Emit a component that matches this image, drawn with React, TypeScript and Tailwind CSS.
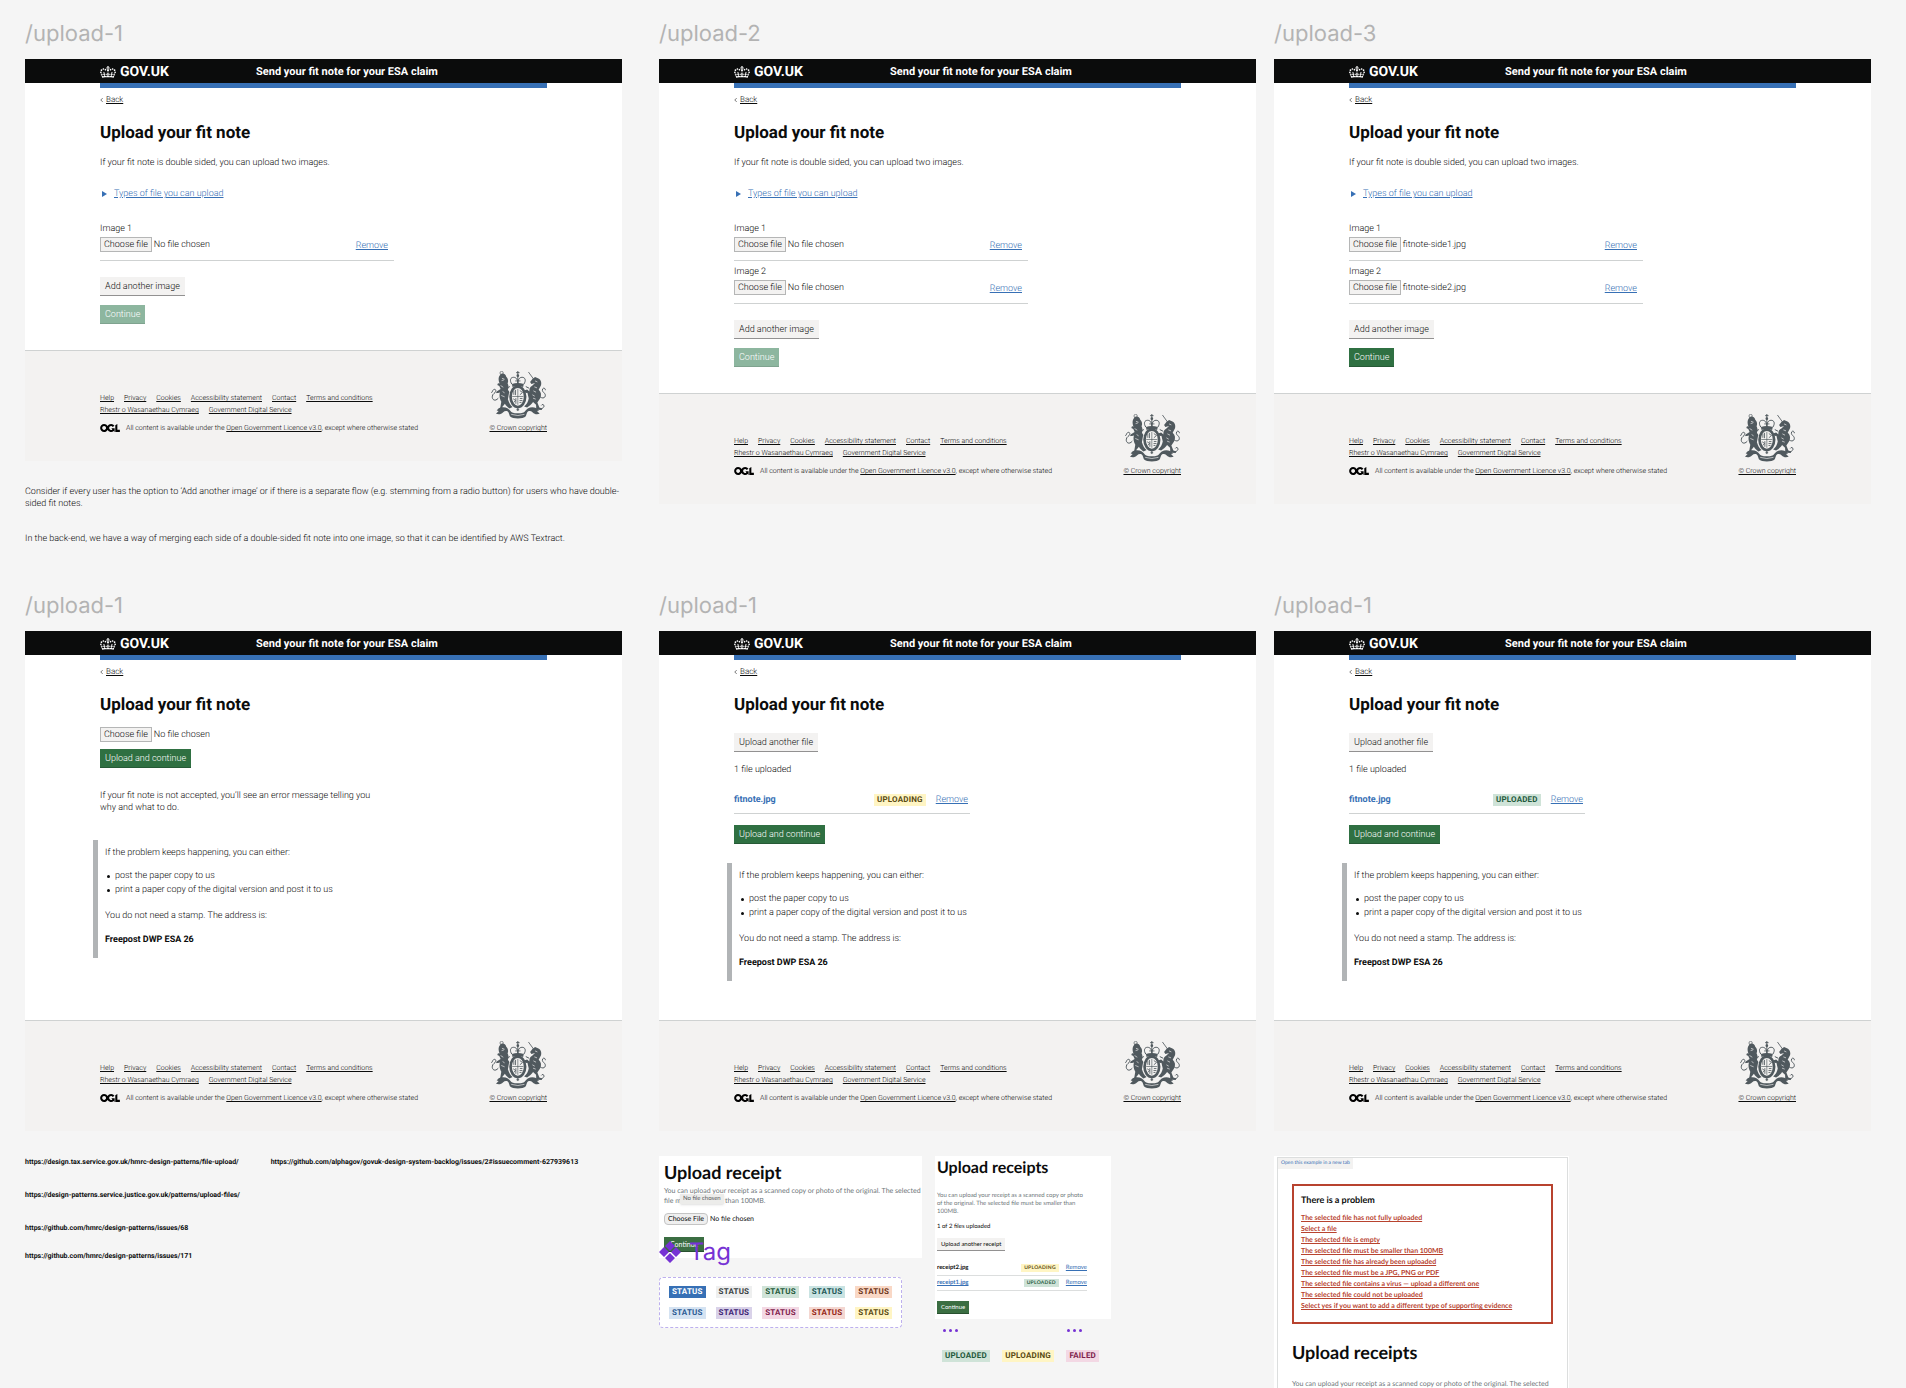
import type { ReactNode } from "react";

const roboto = "font-['Roboto',sans-serif]";
const lato = "font-['Lato',sans-serif]";
const inter = "font-['Inter',sans-serif]";

function Crown() {
  return (
    <svg viewBox="0 0 132 97" className="h-3 w-4" fill="currentColor" aria-hidden="true">
      <path
        fillRule="evenodd"
        d="M25 30.2c3.5 1.5 7.7-.2 9.1-3.7 1.5-3.6-.2-7.8-3.9-9.2-3.6-1.4-7.6.3-9.1 3.9-1.4 3.5.3 7.5 3.9 9zM9 39.5c3.6 1.5 7.8-.2 9.2-3.7 1.5-3.6-.2-7.8-3.9-9.1-3.6-1.5-7.6.2-9.1 3.8-1.4 3.5.3 7.5 3.8 9zM4.4 57.2c3.5 1.5 7.7-.2 9.1-3.8 1.5-3.6-.2-7.7-3.9-9.1-3.5-1.5-7.6.3-9.1 3.8-1.4 3.5.3 7.6 3.9 9.1zm38.3-21.4c3.5 1.5 7.7-.2 9.1-3.8 1.5-3.6-.2-7.7-3.9-9.1-3.6-1.5-7.6.3-9.1 3.8-1.3 3.6.4 7.7 3.9 9.1zm64.4-5.6c-3.6 1.5-7.8-.2-9.1-3.7-1.5-3.6.2-7.8 3.8-9.2 3.6-1.4 7.7.3 9.2 3.9 1.3 3.5-.4 7.5-3.9 9zm15.9 9.3c-3.6 1.5-7.7-.2-9.1-3.7-1.5-3.6.2-7.8 3.7-9.1 3.6-1.5 7.7.2 9.2 3.8 1.5 3.5-.3 7.5-3.8 9zm4.7 17.7c-3.6 1.5-7.8-.2-9.2-3.8-1.5-3.6.2-7.7 3.9-9.1 3.6-1.5 7.7.3 9.2 3.8 1.3 3.5-.4 7.6-3.9 9.1zM89.3 35.8c-3.6 1.5-7.8-.2-9.2-3.8-1.4-3.6.2-7.7 3.9-9.1 3.6-1.5 7.7.3 9.2 3.8 1.4 3.6-.3 7.7-3.9 9.1zM69.7 17.7l8.9 4.7V9.3l-8.9 2.8c-.2-.3-.5-.6-.9-.9L72.4 0H59.6l3.5 11.2c-.3.3-.6.5-.9.9l-8.8-2.8v13.1l8.8-4.7c.3.3.6.7.9.9l-5 15.4v.1c-.2.8-.4 1.6-.4 2.4 0 4.1 3.1 7.5 7 8.1h.2c.3 0 .7.1 1 .1.4 0 .7 0 1-.1h.2c4-.6 7.1-4.1 7.1-8.1 0-.8-.1-1.7-.4-2.4V34l-5.1-15.4c.4-.2.7-.6 1-.9zM66 92.8c16.9 0 32.8 1.1 47.1 3.2 4-16.9 8.9-26.7 14-33.5l-9.6-3.4c1 4.9 1.1 7.2 0 10.2-1.5-1.4-3-4.3-4.2-8.7L108.6 76c2.8-2 5-3.2 7.5-3.3-4.4 9.4-10 11.9-13.6 11.2-4.3-.8-6.3-4.6-5.6-7.9 1-4.7 5.7-5.9 8-.5 4.3-8.7-3-11.4-7.6-8.8 7.1-7.2 7.9-13.5 2.1-21.1-8 6.1-8.1 12.3-4.5 20.8-4.7-5.4-12.1-2.5-9.5 6.2 3.4-5.2 7.9-2 7.2 3.1-.6 4.3-6.4 7.8-13.5 7.2-10.3-.9-10.9-8-11.2-13.8 2.5-.5 7.1 1.8 11 7.3L80.2 60c-4.1 4.4-8 5.3-12.3 5.4 1.4-4.4 8-11.6 8-11.6H55.5s6.4 7.2 7.9 11.6c-4.2-.1-8-1-12.3-5.4l1.4 16.4c3.9-5.5 8.5-7.7 10.9-7.3-.3 5.8-.9 12.8-11.1 13.8-7.2.6-12.9-2.9-13.5-7.2-.7-5 3.8-8.3 7.1-3.1 2.7-8.7-4.6-11.6-9.4-6.2 3.7-8.5 3.6-14.7-4.6-20.8-5.8 7.6-5 13.9 2.2 21.1-4.7-2.6-11.9.1-7.7 8.8 2.3-5.5 7.1-4.2 8.1.5.7 3.3-1.3 7.1-5.7 7.9-3.5.7-9-1.8-13.5-11.2 2.5.1 4.7 1.3 7.5 3.3l-4.7-15.4c-1.2 4.4-2.7 7.2-4.3 8.7-1.1-3-.9-5.3 0-10.2l-9.5 3.4c5 6.9 9.9 16.7 14 33.5 14.8-2.1 30.8-3.2 47.7-3.2z"
      />
    </svg>
  );
}

function LicenceLogo() {
  return (
    <svg viewBox="0 0 483.2 195.7" className="h-2 w-5 shrink-0" fill="#000" aria-hidden="true">
      <path d="M421.5 142.8V.1l-50.7 32.3v161.1h112.4v-50.7zm-122.3-9.6A47.12 47.12 0 0 1 221 97.8c0-26 21.1-47.1 47.1-47.1 16.7 0 31.4 8.7 39.7 21.8l42.7-27.2A97.63 97.63 0 0 0 268.1 0c-36.5 0-68.3 20.1-85.1 49.7A98 98 0 0 0 97.8 0C43.9 0 0 43.9 0 97.8s43.9 97.8 97.8 97.8c36.5 0 68.3-20.1 85.1-49.7a97.76 97.76 0 0 0 149.6 25.4l19.4 22.2h3v-87.8h-80l24.3 27.5zM97.8 145c-26 0-47.1-21.1-47.1-47.1s21.1-47.1 47.1-47.1 47.1 21.1 47.1 47.1S123.8 145 97.8 145" />
    </svg>
  );
}

/* Royal arms: crown above an oval shield, lion and unicorn supporters, ribbon below */
function RoyalArms() {
  return (
    <svg viewBox="0 0 172 145" className="h-12 w-[57px]" fill="#50595e" stroke="#50595e" aria-hidden="true">
      {/* crown */}
      <path d="M84 0v13M79 5h10" strokeWidth="3" fill="none" />
      <circle cx="84" cy="14" r="4" stroke="none" />
      <path
        d="M66 40C58 28 62 19 71 19s13 8 13 20c0-12 4-20 13-20s13 9 5 21M84 15v24"
        fill="none"
        strokeWidth="3"
      />
      <path d="M66 39q18-6 36 0l-2 9q-16-5-32 0z" stroke="none" />
      <path d="M76 30h16" strokeWidth="2.5" />
      {/* shield */}
      <ellipse cx="84" cy="78" rx="22" ry="31" fill="#f3f2f1" strokeWidth="8" />
      <path d="M84 54v48M67 77h34" strokeWidth="2" />
      <path d="M72 59v13M77 57v16M90 59l8 6-8 7M70 84l7 5-5 6M78 82v17M90 83h8M89 89h9M89 95h6" fill="none" strokeWidth="2.5" />
      {/* lion */}
      <path
        d="M31 10c7-5 16-1 18 7 6 6 7 14 4 20 3 6 4 14 1 20l4 6-4 22c3 10 7 18 14 24l-9 4c-6-4-11-8-14-14l-8 10 5 8-19 1 3-5 5-3 3-17c-5-9-7-19-4-29-6 4-8 1-12 3l2-5 12-8-4-9-6-3 2-5 5 1c-4-8-5-20 2-27z"
        stroke="none"
      />
      <path d="M25 82c-10 12-20 4-18-6 1-8 8-8 10-14 2-5-2-8-6-6-4 3-3 7-7 10" fill="none" strokeWidth="3" />
      <circle cx="35" cy="6" r="5" fill="none" strokeWidth="2" />
      <path d="M36 22l8 3M35 29l7-2M32 44l8 5M38 62l6 4M34 74l10 4" stroke="#f3f2f1" strokeWidth="2" />
      {/* unicorn */}
      <path d="M116 3l16 22" strokeWidth="2.5" fill="none" />
      <path
        d="M128 24l8-6 7 3c9 3 14 12 11 22l-7 14c8 7 9 17 4 26l-8 12 6 15 9 3-2 5-16-2-1-14-9-8c-4 7-11 12-18 16l-9-3c8-6 12-14 14-24l-4-17-8-1-2-6 9-3 8 7c-3-8 0-15 8-19l8-8-11 3-4-6z"
        stroke="none"
      />
      <path d="M151 78c12 9 20-2 14-10-4-5-9-7-6-14 2-4 9-2 8 4M140 112c8 5 20 3 23-5 1-6-6-8-8-3" fill="none" strokeWidth="3" />
      <path d="M136 30l7 3M134 48l8 3M131 60l8 4M128 72l7 4M130 82l8 3" stroke="#f3f2f1" strokeWidth="2" />
      <path d="M118 52l-10-5M120 61l-11 4M50 52l10-5M48 61l10 4" strokeWidth="3" />
      {/* ribbon */}
      <path
        d="M20 119c8-10 22-13 34-6 5 3 8 10 13 12 10 4 24 4 34 0 5-2 8-9 13-12 12-7 26-4 34 6l-6 2 8 8c-9 3-16 1-21-4-6-6-13-6-17 0l-4 12c-8 9-40 9-48 0l-4-12c-4-6-11-6-17 0-5 5-12 7-21 4l8-8z"
        stroke="none"
      />
      <path d="M64 131q20 7 40 0" stroke="#f3f2f1" strokeWidth="2" fill="none" />
      <path d="M84 112v9M80 117h8" strokeWidth="3" />
    </svg>
  );
}

function A({ children, className = "" }: { children: ReactNode; className?: string }) {
  return (
    <a href="#" className={"underline underline-offset-1 " + className}>
      {children}
    </a>
  );
}

function Footer() {
  return (
    <footer className="flex items-end justify-between border-t border-[#cfd2d2] bg-[#f3f2f1] px-[75px] pt-5 pb-[27px] text-[7px] leading-3 font-light whitespace-nowrap">
      <div>
        <nav aria-label="Support links">
          <ul className="flex gap-2.5">
            {["Help", "Privacy", "Cookies", "Accessibility statement", "Contact", "Terms and conditions"].map((t) => (
              <li key={t}>
                <A>{t}</A>
              </li>
            ))}
          </ul>
          <ul className="flex gap-2.5">
            <li>
              <A>Rhestr o Wasanaethau Cymraeg</A>
            </li>
            <li>
              <A>Government Digital Service</A>
            </li>
          </ul>
        </nav>
        <div className="mt-1.5 flex items-center gap-1.5">
          <LicenceLogo />
          <p>
            All content is available under the <A>Open Government Licence v3.0</A>, except where otherwise stated
          </p>
        </div>
      </div>
      <div className="flex flex-col items-center gap-[3px]">
        <RoyalArms />
        <A>© Crown copyright</A>
      </div>
    </footer>
  );
}

function Screen({
  title,
  className = "",
  bodyClass,
  children,
  notes,
}: {
  title: string;
  className?: string;
  bodyClass: string;
  children: ReactNode;
  notes?: ReactNode;
}) {
  return (
    <section className={"min-w-0 flex-1 " + className}>
      <h2 className={inter + " text-[22px] leading-[22px] text-[#b3b3b3]"}>{title}</h2>
      <div className="mt-3.5 bg-white">
        <header className="flex h-6 items-center bg-[#0b0c0c] px-[75px] pt-0.5 font-bold text-white">
          <div className="flex w-[156px] items-center gap-1 text-[14px] leading-4">
            <Crown />
            GOV.UK
          </div>
          <div className="text-[11px] leading-4">Send your fit note for your ESA claim</div>
        </header>
        <div className={"px-[75px] text-[9px] leading-3 font-light text-[#0b0c0c] " + bodyClass}>
          <div className="h-[5px] bg-[#3770b5]" />
          <div className="mt-1.5 flex items-center gap-[3px] text-[8px]">
            <svg viewBox="0 0 4 6" className="h-1.5 w-[3px]" fill="none" stroke="#444" aria-hidden="true">
              <path d="M3.5.5 1 3l2.500 2.500" />
            </svg>
            <A>Back</A>
          </div>
          <h1 className="mt-[17px] mb-px text-[17px] leading-5 font-bold">Upload your fit note</h1>
          {children}
        </div>
        <Footer />
      </div>
      {notes}
    </section>
  );
}

function FilePick({ id, label, file = "No file chosen" }: { id: string; label?: string; file?: string }) {
  return (
    <div className="relative">
      {label && (
        <label htmlFor={id} className="mb-0.5 block">
          {label}
        </label>
      )}
      <label htmlFor={id} className="flex items-center gap-0.5">
        <span className="border border-[#b5b6b6] bg-[#f3f2f1] px-[3px] pt-px leading-3">Choose file</span>
        <span>{file}</span>
      </label>
      <input id={id} type="file" className="sr-only" aria-label={label ?? "Choose file"} />
    </div>
  );
}

function GreyButton({ children }: { children: ReactNode }) {
  return (
    <button className="block h-[19px] border-b border-[#929191] bg-[#f3f2f1] px-[5px] font-light">{children}</button>
  );
}

function GreenButton({ children, disabled }: { children: ReactNode; disabled?: boolean }) {
  return (
    <button
      disabled={disabled}
      className={
        "block h-[19px] border-b px-[5px] font-light text-white " +
        (disabled ? "border-[#7fa38f] bg-[#8db69f]" : "border-[#265a36] bg-[#2f7042]")
      }
    >
      {children}
    </button>
  );
}

function ImagesForm({ name, files, ready }: { name: string; files: string[]; ready?: boolean }) {
  return (
    <>
      <p className="mt-3.5">If your fit note is double sided, you can upload two images.</p>
      <details className="mt-[19px]">
        <summary className="flex items-center gap-[7px] pl-0.5 text-[#3770b5]">
          <svg viewBox="0 0 5 6" className="h-1.5 w-[5px]" fill="currentColor" aria-hidden="true">
            <path d="M0 0l5 3-5 3z" />
          </svg>
          <span className="underline underline-offset-1">Types of file you can upload</span>
        </summary>
        JPG, PNG or PDF
      </details>
      <ul className="mt-[23px] flex w-[294px] flex-col gap-[5px]">
        {files.map((f, i) => (
          <li key={i} className="flex items-end justify-between border-b border-[#cfd2d2] pr-1.5 pb-2">
            <FilePick id={name + "-file-" + (i + 1)} label={"Image " + (i + 1)} file={f} />
            <A className="text-[#3770b5]">Remove</A>
          </li>
        ))}
      </ul>
      <div className="mt-4 flex flex-col items-start gap-[9px]">
        <GreyButton>Add another image</GreyButton>
        <GreenButton disabled={!ready}>Continue</GreenButton>
      </div>
    </>
  );
}

function Inset({ className }: { className: string }) {
  return (
    <div className={"-ml-[7px] border-l-[5px] border-[#b1b4b6] pt-[7px] pb-3 pl-[7px] " + className}>
      <p>If the problem keeps happening, you can either:</p>
      <ul className="mt-2.5 leading-[14px]">
        {["post the paper copy to us", "print a paper copy of the digital version and post it to us"].map((t) => (
          <li key={t} className="flex items-center gap-[5px] pl-0.5">
            <span className="size-[3px] rounded-full bg-[#0b0c0c]" />
            {t}
          </li>
        ))}
      </ul>
      <p className="mt-[13px]">You do not need a stamp. The address is:</p>
      <p className="mt-3 font-bold">Freepost DWP ESA 26</p>
    </div>
  );
}

const green = "bg-[#cfe3d8] text-[#1f5a3c]";
const yellow = "bg-[#fff5c4] text-[#5a4a12]";
const pink = "bg-[#f3d8e4] text-[#80224d]";

function Tag({ tone, children }: { tone: string; children: ReactNode }) {
  return (
    <strong className={"block h-3 px-[3px] text-[8px] leading-3 font-bold tracking-wide " + tone}>{children}</strong>
  );
}

function UploadedForm({ status, tone }: { status: string; tone: string }) {
  return (
    <>
      <div className="mt-[18px]">
        <GreyButton>Upload another file</GreyButton>
      </div>
      <p className="mt-3">1 file uploaded</p>
      <div className="mt-[18px] flex w-[236px] items-center border-b border-[#cfd2d2] pb-[7px]">
        <strong className="font-bold text-[#3770b5]">fitnote.jpg</strong>
        <div className="mr-2.5 ml-auto">
          <Tag tone={tone}>{status}</Tag>
        </div>
        <A className="pr-0.5 text-[#3770b5]">Remove</A>
      </div>
      <div className="mt-[11px]">
        <GreenButton>Upload and continue</GreenButton>
      </div>
      <Inset className="mt-[19px]" />
    </>
  );
}

const statusTones = [
  "bg-[#3770b5] text-white",
  "bg-[#eeefef] text-[#383f43]",
  green,
  "bg-[#c9e3e2] text-[#1c5554]",
  "bg-[#f9d8c6] text-[#6e3619]",
  "bg-[#d5e3f2] text-[#2a5a93]",
  "bg-[#d9d2e9] text-[#3d2375]",
  pink,
  "bg-[#f4d7d1] text-[#942514]",
  yellow,
];

function ReceiptCard() {
  return (
    <div className={lato + " bg-white pt-[5px] pb-1.5 pl-[5px] text-[7px] text-[#6f777b]"}>
      <h3 className="text-[18px] leading-[22px] font-bold text-[#0b0c0c]">Upload receipt</h3>
      <div className="relative mt-[3px] leading-[10px]">
        You can upload your receipt as a scanned copy or photo of the original. The selected file must be smaller than
        100MB.
        <span className="absolute top-2 left-4 bg-[#ececea] px-[3px] text-[6px] text-[#55585a] shadow-sm">
          No file chosen
        </span>
      </div>
      <label className="relative mt-[7px] flex items-center gap-0.5 text-[7px] text-[#0b0c0c]">
        <span className="rounded-sm border border-[#c4c4c4] bg-[#efefef] px-[3px] leading-[10px]">Choose File</span>
        No file chosen
        <input type="file" className="sr-only" />
      </label>
      <button className="mt-3 block h-[15px] border-b border-[#28502f] bg-[#3b6e42] px-1.5 text-[7px] text-white">
        Continue
      </button>
    </div>
  );
}

function FileRow({ name, link, status, tone }: { name: string; link?: boolean; status: string; tone: string }) {
  return (
    <li className="flex h-[15px] items-center border-b border-[#dcdede]">
      {link ? <A className="font-bold text-[#3770b5]">{name}</A> : <strong>{name}</strong>}
      <strong className={"mr-[7px] ml-auto px-[3px] text-[5px] leading-2 tracking-wider " + tone}>{status}</strong>
      <A className="text-[#3770b5]">Remove</A>
    </li>
  );
}

function Dots() {
  return (
    <div className="flex gap-[3px]">
      <i className="size-[3px] rounded-full bg-[#7632d4]" />
      <i className="size-[3px] rounded-full bg-[#7632d4]" />
      <i className="size-[3px] rounded-full bg-[#7632d4]" />
    </div>
  );
}

function ReceiptsCard() {
  return (
    <div className={lato + " bg-white px-0.5 pt-0.5 pb-[5px] text-[6px] leading-2"}>
      <h3 className="text-[16px] leading-5 font-bold">Upload receipts</h3>
      <p className="mt-3.5 w-[150px] text-[#6f777b]">
        You can upload your receipt as a scanned copy or photo of the original. The selected file must be smaller than
        100MB.
      </p>
      <p className="mt-[7px]">1 of 2 files uploaded</p>
      <button className="mt-[7px] block h-[13px] border-b border-[#929191] bg-[#f3f2f1] px-1">
        Upload another receipt
      </button>
      <ul className="mt-2.5 w-[150px]">
        <FileRow name="receipt2.jpg" status="UPLOADING" tone={yellow} />
        <FileRow name="receipt1.jpg" link status="UPLOADED" tone={green} />
      </ul>
      <button className="mt-2.5 block h-[13px] border-b border-[#28502f] bg-[#3b6e42] px-1 text-white">Continue</button>
    </div>
  );
}

const problems = [
  "The selected file has not fully uploaded",
  "Select a file",
  "The selected file is empty",
  "The selected file must be smaller than 100MB",
  "The selected file has already been uploaded",
  "The selected file must be a JPG, PNG or PDF",
  "The selected file contains a virus — upload a different one",
  "The selected file could not be uploaded",
  "Select yes if you want to add a different type of supporting evidence",
];

function ProblemCard() {
  return (
    <div className={lato + " w-[295px] bg-white pt-px pr-px pl-[3px]"}>
      <div className="h-[300px] border border-[#dcdede]">
        <a href="#" className="block w-fit bg-[#f3f2f1] px-[3px] text-[5px] leading-[11px] text-[#3770b5]">
          Open this example in a new tab
        </a>
        <div className="px-3.5">
          <div role="alert" className="mt-[15px] border-2 border-[#b8432f] px-[7px] pt-2 pb-2.5">
            <h3 className="text-[9px] leading-3 font-bold">There is a problem</h3>
            <ul className="mt-[7px] text-[7px] leading-[11px] font-bold text-[#b8432f]">
              {problems.map((p) => (
                <li key={p}>
                  <A>{p}</A>
                </li>
              ))}
            </ul>
          </div>
          <h3 className="mt-[17px] text-[18px] leading-[22px] font-bold">Upload receipts</h3>
          <p className="mt-4 w-[260px] text-[7px] leading-[10px] text-[#6f777b]">
            You can upload your receipt as a scanned copy or photo of the original. The selected
          </p>
        </div>
      </div>
    </div>
  );
}

function Reference({ url }: { url: string }) {
  return <a href={url}>{url}</a>;
}

export default function App() {
  return (
    <main
      className={
        roboto +
        " h-screen overflow-hidden bg-[#f5f5f5] pt-[23px] pr-[35px] pl-[25px] text-[#0b0c0c] [text-rendering:geometricPrecision]"
      }
    >
      <div className="flex items-start">
        <Screen
          title="/upload-1"
          className="mr-[37px]"
          bodyClass="pb-[26px]"
          notes={
            <div className="mt-[25px] text-[9px] leading-3 font-light">
              <p>
                Consider if every user has the option to ‘Add another image’ or if there is a separate flow (e.g.
                stemming from a radio button) for users who have double-sided fit notes.
              </p>
              <p className="mt-[23px]">
                In the back-end, we have a way of merging each side of a double-sided fit note into one image, so that
                it can be identified by AWS Textract.
              </p>
            </div>
          }
        >
          <ImagesForm name="one" files={["No file chosen"]} />
        </Screen>
        <Screen title="/upload-2" className="mr-[18px]" bodyClass="pb-[26px]">
          <ImagesForm name="two" files={["No file chosen", "No file chosen"]} />
        </Screen>
        <Screen title="/upload-3" bodyClass="pb-[26px]">
          <ImagesForm name="three" files={["fitnote-side1.jpg", "fitnote-side2.jpg"]} ready />
        </Screen>
      </div>

      <div className="mt-[50px] flex items-start">
        <Screen title="/upload-1" className="mr-[37px]" bodyClass="pb-[62px]">
          <div className="mt-3">
            <FilePick id="single-file" />
          </div>
          <div className="mt-[7px]">
            <GreenButton>Upload and continue</GreenButton>
          </div>
          <p className="mt-[22px] w-[280px]">
            If your fit note is not accepted, you’ll see an error message telling you why and what to do.
          </p>
          <Inset className="mt-[26px]" />
        </Screen>
        <Screen title="/upload-1" className="mr-[18px]" bodyClass="pb-[39px]">
          <UploadedForm status="UPLOADING" tone={yellow} />
        </Screen>
        <Screen title="/upload-1" bodyClass="pb-[39px]">
          <UploadedForm status="UPLOADED" tone={green} />
        </Screen>
      </div>

      <div className="flex items-start pt-[25px]">
        <div className="mr-[37px] min-w-0 flex-1 text-[7px] leading-3 font-bold whitespace-nowrap">
          <div className="flex gap-8">
            <Reference url="https://design.tax.service.gov.uk/hmrc-design-patterns/file-upload/" />
            <Reference url="https://github.com/alphagov/govuk-design-system-backlog/issues/2#issuecomment-627939613" />
          </div>
          <p className="mt-[21px]">
            <Reference url="https://design-patterns.service.justice.gov.uk/patterns/upload-files/" />
          </p>
          <p className="mt-[21px]">
            <Reference url="https://github.com/hmrc/design-patterns/issues/68" />
          </p>
          <p className="mt-4">
            <Reference url="https://github.com/hmrc/design-patterns/issues/171" />
          </p>
        </div>

        <div className="mr-[18px] flex min-w-0 flex-1 items-start gap-[13px]">
          <div className="w-[263px]">
            <ReceiptCard />
            <div className="relative -mt-5 flex items-center gap-2 text-[#7632d4]">
              <svg viewBox="0 0 22 22" className="size-[22px]" fill="currentColor" aria-hidden="true">
                <path d="M11 0l5 5-5 5-5-5zM5 6l5 5-5 5-5-5zM17 6l5 5-5 5-5-5zM11 12l5 5-5 5-5-5z" />
              </svg>
              <h3 className={inter + " text-[24px] leading-[28px]"}>Tag</h3>
            </div>
            <div className="mt-[11px] grid w-[243px] grid-cols-5 justify-items-center gap-y-[9px] rounded border border-dashed border-[#bdb0ee] bg-white px-1 py-2">
              {statusTones.map((t) => (
                <Tag key={t} tone={t}>
                  STATUS
                </Tag>
              ))}
            </div>
          </div>
          <div className="w-[176px]">
            <ReceiptsCard />
            <div className="mt-2.5 flex justify-between pr-[29px] pl-2">
              <Dots />
              <Dots />
            </div>
            <div className="mt-[18px] flex justify-between pr-3 pl-[7px]">
              <Tag tone={green}>UPLOADED</Tag>
              <Tag tone={yellow}>UPLOADING</Tag>
              <Tag tone={pink}>FAILED</Tag>
            </div>
          </div>
        </div>

        <div className="min-w-0 flex-1">
          <ProblemCard />
        </div>
      </div>
    </main>
  );
}
